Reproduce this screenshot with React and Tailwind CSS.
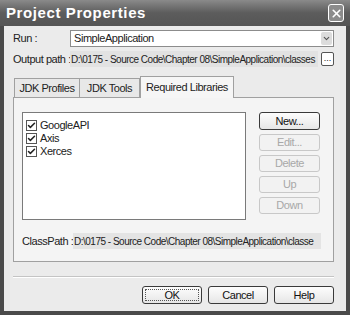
import { X, ChevronDown, Check } from "lucide-react";

function Btn({ children, disabled, focused, className = "" }) {
  return (
    <div
      className={`flex items-center justify-center rounded-[3px] border text-[11px] ${
        disabled
          ? "border-[#c8c8c8] bg-[#f2f2f2] text-[#a8a8a8]"
          : "border-[#3a3a3a] bg-gradient-to-b from-[#fdfdfd] to-[#e6e6e6] text-[#111]"
      } ${className}`}
    >
      {focused ? (
        <span className="flex h-[calc(100%-4px)] w-[calc(100%-4px)] items-center justify-center border border-dotted border-[#555]">
          {children}
        </span>
      ) : (
        children
      )}
    </div>
  );
}

function Item({ label }) {
  return (
    <div className="flex h-[13px] items-center gap-[3px]">
      <span className="flex h-[11px] w-[11px] items-center justify-center border border-[#555] bg-white">
        <Check className="h-[9px] w-[9px] text-[#222]" strokeWidth={4} />
      </span>
      <span>{label}</span>
    </div>
  );
}

export default function App() {
  return (
    <div
      className="h-[315px] w-[350px] overflow-hidden bg-[#4a4a4a] text-[11px] tracking-[-0.45px] text-[#222]"
      style={{ fontFamily: '"Liberation Sans", Arial, sans-serif' }}
    >
      {/* Title bar */}
      <div className="flex h-[26px] items-center justify-between bg-gradient-to-b from-[#8a8a8a] via-[#5c5c5c] to-[#555] pl-[6px] pr-[6px]">
        <span className="text-[15px] font-bold tracking-[0.6px] text-white">
          Project Properties
        </span>
        <span className="flex h-[18px] w-[16px] items-center justify-center rounded-[3px] border border-white bg-[#8c8c8c]">
          <X className="h-[13px] w-[13px] text-white" strokeWidth={3} />
        </span>
      </div>

      {/* Body */}
      <div className="mx-[4px] flex h-[285px] flex-col bg-[#ebebeb] pl-[9px] pr-[12px]">
        {/* Run row */}
        <div className="mt-[4px] flex h-[17px] items-center">
          <span className="w-[57px]">Run :</span>
          <div className="flex h-[17px] flex-1 items-center justify-between border border-[#8c8c8c] bg-white pl-[3px] pr-[1px]">
            <span>SimpleApplication</span>
            <span className="flex h-[13px] w-[11px] items-center justify-center rounded-[2px] bg-[#dcdcdc]">
              <ChevronDown className="h-[9px] w-[9px] text-[#555]" strokeWidth={3} />
            </span>
          </div>
        </div>

        {/* Output path row */}
        <div className="mt-[4px] flex h-[16px] items-center">
          <span className="w-[57px] whitespace-nowrap">Output path :</span>
          <div className="flex h-[16px] flex-1 items-center overflow-hidden whitespace-nowrap bg-[#e2e2e2] pl-[1px] text-[10px] tracking-[-0.5px]">
            D:\0175 - Source Code\Chapter 08\SimpleApplication\classes
          </div>
          <div className="ml-[3px] flex h-[14px] w-[13px] items-end justify-center rounded-[2px] border border-[#555] bg-white pb-[2px] text-[9px] leading-none tracking-normal">
            ...
          </div>
        </div>

        {/* Tabs */}
        <div className="mt-[9px] flex h-[21px] items-end pl-[1px]">
          <div className="flex h-[19px] w-[66px] items-center justify-center border border-b-0 border-[#a0a0a0] bg-[#e8e8e8]">
            JDK Profiles
          </div>
          <div className="flex h-[19px] w-[60px] items-center justify-center border border-b-0 border-l-0 border-[#a0a0a0] bg-[#e8e8e8]">
            JDK Tools
          </div>
          <div className="relative z-10 -mb-px flex h-[22px] w-[94px] items-center justify-center border border-b-0 border-[#a0a0a0] bg-[#f6f6f6]">
            Required Libraries
          </div>
        </div>

        {/* Tab panel */}
        <div className="flex h-[165px] flex-col border border-[#a0a0a0] bg-[#f4f4f4] pl-[8px] pr-[12px]">
          <div className="mt-[14px] flex gap-[13px]">
            <div className="flex h-[108px] w-[224px] flex-col border border-[#7a7a7a] bg-white pl-[3px] pt-[6px]">
              <Item label="GoogleAPI" />
              <Item label="Axis" />
              <Item label="Xerces" />
            </div>
            <div className="flex w-[61px] flex-col gap-[4px]">
              <Btn className="h-[18px]">New...</Btn>
              <Btn className="h-[17px]" disabled>Edit...</Btn>
              <Btn className="h-[17px]" disabled>Delete</Btn>
              <Btn className="h-[17px]" disabled>Up</Btn>
              <Btn className="h-[17px]" disabled>Down</Btn>
            </div>
          </div>
          <div className="mt-[13px] flex h-[16px] items-center">
            <span className="w-[51px] whitespace-nowrap">ClassPath :</span>
            <div className="flex h-[16px] w-[251px] items-center overflow-hidden whitespace-nowrap bg-[#e4e4e4] pl-[1px] text-[10px] tracking-[-0.5px]">
              D:\0175 - Source Code\Chapter 08\SimpleApplication\classe
            </div>
          </div>
        </div>

        {/* Separator */}
        <div className="mt-[14px] h-[2px] border-t border-b border-t-[#c4c4c4] border-b-white" />

        {/* Bottom buttons */}
        <div className="mt-[8px] flex justify-end gap-[6px]">
          <Btn className="h-[18px] w-[60px]" focused>OK</Btn>
          <Btn className="h-[18px] w-[60px]">Cancel</Btn>
          <Btn className="h-[18px] w-[60px]">Help</Btn>
        </div>
      </div>
    </div>
  );
}
